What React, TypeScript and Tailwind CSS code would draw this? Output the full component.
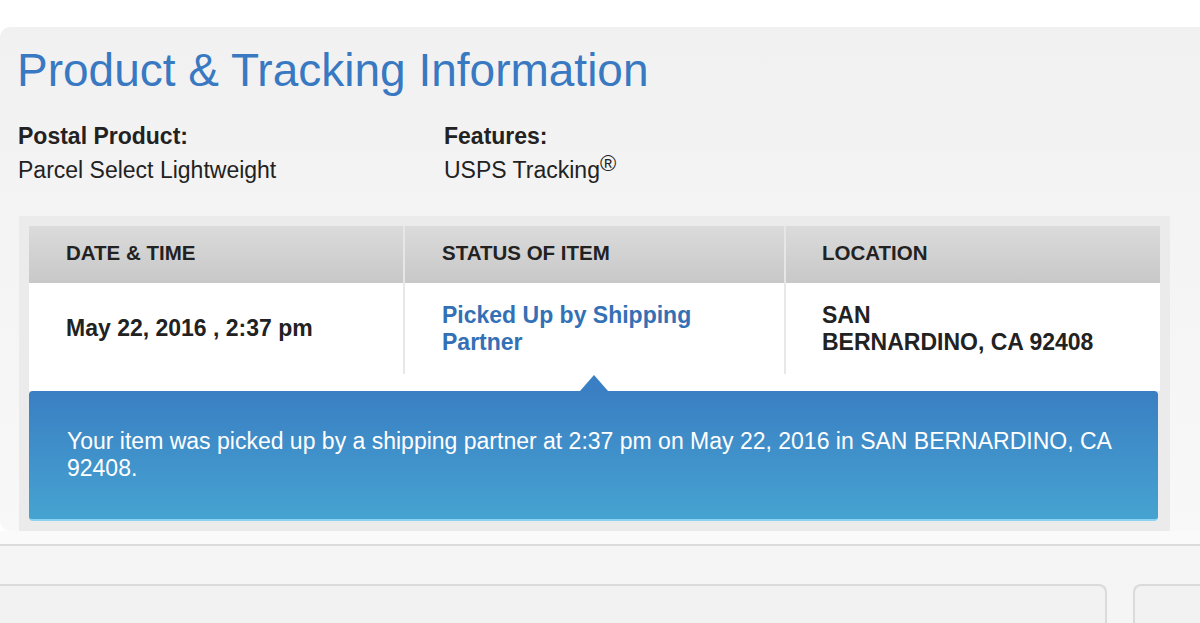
export default function App() {
  return (
    <div className="w-[1200px] h-[623px] overflow-hidden bg-white font-['Liberation_Sans',Arial,sans-serif] text-[#222]">
      <div className="pt-[27px]">
        <div className="rounded-l-[10px] bg-gradient-to-b from-[#f2f1f2] to-[#f8f8f8] pt-[20px]">
          <h1 className="pl-[17px] text-[46px] leading-[46px] text-[#3879c2]">
            Product &amp; Tracking Information
          </h1>
          <div className="mt-[26px] flex pl-[18px] text-[23px] leading-[34px]">
            <div className="w-[426px]">
              <div className="font-bold">Postal Product:</div>
              <div>Parcel Select Lightweight</div>
            </div>
            <div>
              <div className="font-bold">Features:</div>
              <div>
                USPS Tracking
                <span className="relative top-[-7px] text-[22px]">®</span>
              </div>
            </div>
          </div>

          <div className="relative mt-[28px] ml-[19px] w-[1151px] bg-[#ebebeb] p-[10px]">
            <div className="grid h-[57px] grid-cols-[374px_381px_377px] bg-gradient-to-b from-[#dbdbdb] to-[#c8c8c8] text-[20.5px] font-bold">
              <div className="flex items-center pl-[37px] pb-[2px]">DATE &amp; TIME</div>
              <div className="flex items-center border-l-2 border-[#e6e6e6] pl-[37px] pb-[2px]">STATUS OF ITEM</div>
              <div className="flex items-center border-l-2 border-[#e6e6e6] pl-[36px] pb-[2px]">LOCATION</div>
            </div>
            <div className="bg-white pb-[17px]">
              <div className="grid h-[91px] grid-cols-[374px_381px_377px] text-[23px] leading-[27px] font-bold">
                <div className="flex items-center pl-[37px] pr-[20px]">May 22, 2016 , 2:37 pm</div>
                <div className="flex items-center border-l-2 border-[#e8e8e8] pl-[37px] pr-[30px] text-[#3470b5]">
                  Picked Up by Shipping Partner
                </div>
                <div className="flex items-center border-l-2 border-[#e8e8e8] pl-[36px] pr-[30px]">
                  <div>
                    SAN
                    <br />
                    BERNARDINO, CA 92408
                  </div>
                </div>
              </div>
            </div>
            <div className="absolute left-[561px] top-[159px] h-0 w-0 border-l-[14px] border-r-[14px] border-b-[16px] border-l-transparent border-r-transparent border-b-[#3a7fc3]" />
            <div className="mr-[2px] flex h-[130px] items-center rounded-[4px] border-b-2 border-[#8cd3f2] bg-gradient-to-b from-[#3a7fc3] to-[#46a3d1] pl-[38px] pr-[30px] text-[23px] leading-[27px] text-white">
              Your item was picked up by a shipping partner at 2:37 pm on May 22, 2016 in SAN BERNARDINO, CA 92408.
            </div>
          </div>
        </div>
        <div className="h-[13px] bg-[#fafafa]" />
        <div className="h-[100px] border-t-2 border-[#dcdcdc] bg-[#f5f5f6] pt-[38px]">
          <div className="flex">
            <div className="-ml-[10px] h-[60px] w-[1117px] rounded-tr-[8px] border-t-2 border-r-2 border-[#dadada] bg-[#f3f2f3]" />
            <div className="ml-[26px] h-[60px] flex-1 rounded-tl-[8px] border-t-2 border-l-2 border-[#dadada] bg-[#f3f2f3]" />
          </div>
        </div>
      </div>
    </div>
  );
}
